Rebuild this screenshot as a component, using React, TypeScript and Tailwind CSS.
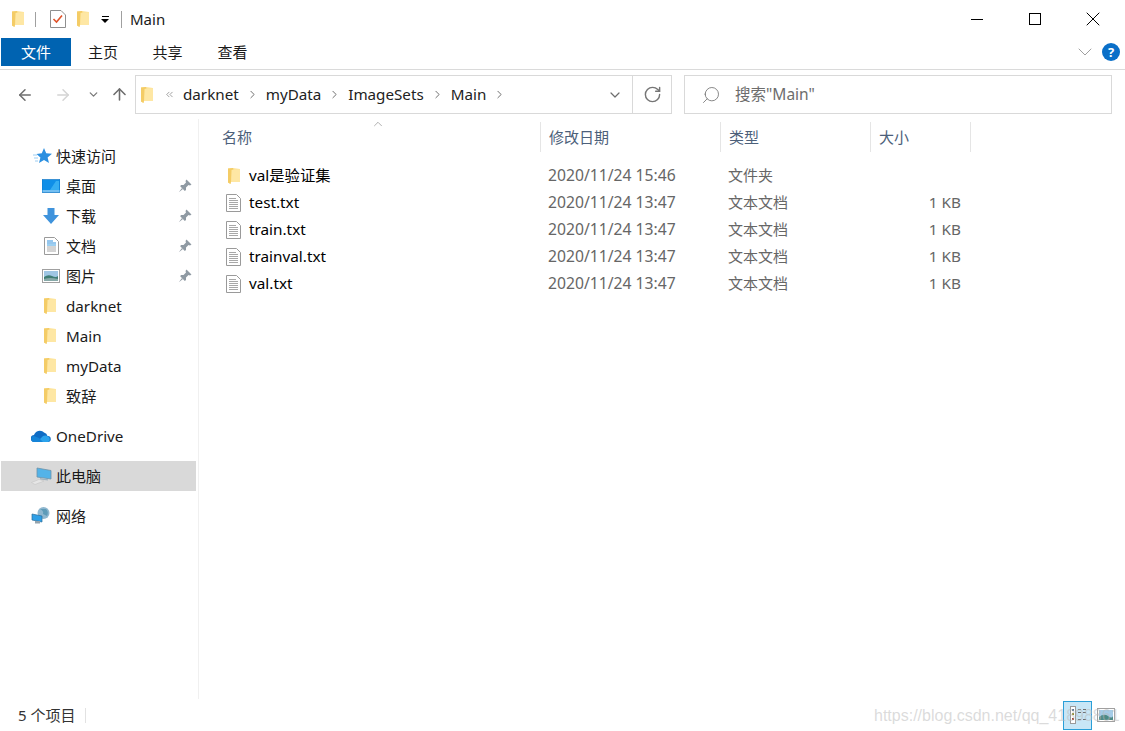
import React from "react";
import { ArrowLeft, ArrowRight, ArrowUp, ChevronDown, ChevronRight, ChevronUp, RotateCw, Search, X, ChevronsLeft } from "lucide-react";

const FONT = '"Noto Sans", "Noto Sans CJK SC", sans-serif';

const FolderIcon = () => (
    <svg width="14" height="18" viewBox="0 0 14 18" className="shrink-0">
        <path d="M1 1.5 L6 1 L13 2 L13 15 L3.5 15 L3.5 17 L1 15.5 Z" fill="#fde49a" />
        <path d="M1 1.5 L6 1 L6.5 2.5 L4.5 3 L4 15 L3.5 17 L1 15.5 Z" fill="#f4cc66" />
        <path d="M5 3 L13 2.5 L13 15 L4.5 15 Z" fill="#fee7a4" />
    </svg>
);

const TextFileIcon = () => (
    <svg width="15" height="18" viewBox="0 0 15 18" className="shrink-0">
        <path d="M0.5 0.5 H10.5 L14.5 4.5 V17.5 H0.5 Z" fill="#fff" stroke="#9a9a9a" />
        <path d="M3 4.5 H10 M3 6.5 H12 M3 8.5 H12 M3 10.5 H12 M3 12.5 H12 M3 14.5 H12" stroke="#a8a8a8" strokeWidth="1" />
    </svg>
);

const Pin = () => (
    <svg width="14" height="14" viewBox="0 0 14 14">
        <path d="M8.5 0.5 L13.5 5.5 L12 6.5 L10.5 6 L8 8.5 L8 11 L6.8 12 L2.2 7.2 L3 6 L5.5 6 L8 3.5 L7.5 2 Z" fill="#8f9aa3" />
        <path d="M4 9 L0.8 13.2 L5 10" fill="#8f9aa3" />
    </svg>
);

const QuickIcon = () => (
    <svg width="20" height="18" viewBox="0 0 20 18">
        <path d="M11 1 L13.2 6.2 L19 6.7 L14.6 10.4 L16 16 L11 13 L6 16 L7.4 10.4 L3.5 7 L8.8 6.2 Z" fill="#2b8fe0" />
        <path d="M0 8 H4 M1 11 H5 M2 14 H5" stroke="#9ccdf2" strokeWidth="1" />
    </svg>
);

const DesktopIcon = () => (
    <svg width="18" height="14" viewBox="0 0 18 14">
        <rect x="0" y="0.5" width="18" height="13" fill="#0f8fe8" stroke="#0a6fc0" strokeWidth="0.6" />
        <path d="M8 11 L14 2 H17 V11 Z" fill="#35aef2" />
        <rect x="0.5" y="11.5" width="17" height="1" fill="#d8effc" />
    </svg>
);

const DownloadIcon = () => (
    <svg width="18" height="18" viewBox="0 0 18 18">
        <path d="M5.5 1 H12.5 V8 H17 L9 17 L1 8 H5.5 Z" fill="#3f93dc" />
    </svg>
);

const DocIcon = () => (
    <svg width="15" height="18" viewBox="0 0 15 18">
        <path d="M0.5 0.5 H10.5 L14.5 4.5 V17.5 H0.5 Z" fill="#fff" stroke="#9a9a9a" />
        <path d="M3 4 H9 M3 6 H12" stroke="#2f8fdc" strokeWidth="1" />
        <path d="M3 8 H12" stroke="#3aa0e4" strokeWidth="1" />
        <path d="M3 10 H12 M3 12 H12 M3 14 H12" stroke="#a8a8a8" strokeWidth="1" />
    </svg>
);

const PictureIcon = () => (
    <svg width="18" height="14" viewBox="0 0 18 14">
        <rect x="0.5" y="0.5" width="17" height="13" fill="#fff" stroke="#a0a0a0" />
        <rect x="2" y="2" width="14" height="10" fill="#9fc6e4" />
        <path d="M2 8 Q6 5 10 7 T16 7 V12 H2 Z" fill="#3f7d74" />
        <path d="M2 10 Q8 8 16 10 V12 H2 Z" fill="#87a9a8" />
    </svg>
);

const CloudIcon = () => (
    <svg width="20" height="14" viewBox="0 0 20 14">
        <path d="M3.5 13 A3.5 3.5 0 0 1 3 6 A6 6 0 0 1 13 3.5 A4.5 4.5 0 0 1 16.5 7 A3 3 0 0 1 17 13 Z" fill="#0f6cc4" />
        <path d="M6 13 L12 7 Q15 6 17 7.5 A3 3 0 0 1 17 13 Z" fill="#2ba3ec" />
        <path d="M3.5 13 A3 3 0 0 1 3 7 L8 9 L12 13 Z" fill="#1584d8" />
    </svg>
);

const PcIcon = () => (
    <svg width="21" height="18" viewBox="0 0 21 18">
        <path d="M6 1 L20 3.5 V12 L6 10 Z" fill="#53b3e8" stroke="#6d93aa" strokeWidth="0.8" />
        <path d="M9 11 L17 12.2 L17 13.5 L9 12.5 Z" fill="#9fb3bf" />
        <path d="M0.5 15.5 L8 12.5 L13 14 L4 17.5 Z" fill="#e6e6e6" stroke="#c0c0c0" strokeWidth="0.5" />
    </svg>
);

const NetworkIcon = () => (
    <svg width="20" height="18" viewBox="0 0 20 18">
        <circle cx="12.5" cy="6" r="6" fill="#8fb7cf" />
        <path d="M9 2 Q13 4 12 7 L16 9 Q18 5 15 2 Z" fill="#5e9bb8" />
        <path d="M1 7 L11 9 V15 L1 13 Z" fill="#2f9fe6" stroke="#2a6d99" strokeWidth="0.7" />
        <rect x="4" y="14" width="5" height="2.5" fill="#94a3ad" />
    </svg>
);

const CheckPageIcon = () => (
    <svg width="16" height="18" viewBox="0 0 16 18">
        <path d="M0.5 0.5 H11 L15.5 5 V17.5 H0.5 Z" fill="#fff" stroke="#8f8f8f" />
        <path d="M3.5 9 L6.5 12 L12 5.5" fill="none" stroke="#e0532a" strokeWidth="1.6" />
    </svg>
);

const HelpIcon = () => (
    <div className="flex h-[18px] w-[18px] items-center justify-center rounded-full bg-[#0a6fc8] text-[13px] leading-none font-bold text-white">
        ?
    </div>
);

const DetailsViewIcon = () => (
    <svg width="20" height="20" viewBox="0 0 20 20">
        <rect x="2.5" y="1.5" width="5" height="17" fill="#fff" stroke="#9a9a9a" />
        <rect x="4" y="4" width="2" height="2" fill="#4a6f96" />
        <rect x="4" y="8" width="2" height="2" fill="#8d8a2c" />
        <rect x="4" y="13" width="2" height="2" fill="#a53a22" />
        <path d="M10 4.5 H13 M15 4.5 H18 M10 7.5 H13 M15 7.5 H18 M10 14.5 H13 M15 14.5 H18" stroke="#6f6f6f" strokeWidth="1" />
    </svg>
);

const LargeViewIcon = () => (
    <svg width="18" height="14" viewBox="0 0 18 14">
        <rect x="0.5" y="0.5" width="17" height="13" fill="#fff" stroke="#a0a0a0" />
        <rect x="2" y="2" width="14" height="10" fill="#a5cce8" />
        <path d="M2 9 Q7 5 11 8 T16 8 V12 H2 Z" fill="#4c8a86" />
    </svg>
);

const quickItems = [
    { name: "桌面", icon: <DesktopIcon /> },
    { name: "下载", icon: <DownloadIcon /> },
    { name: "文档", icon: <DocIcon /> },
    { name: "图片", icon: <PictureIcon /> },
];

const pinnedFolders = ["darknet", "Main", "myData", "致辞"];

const files = [
    { name: "val是验证集", date: "2020/11/24 15:46", type: "文件夹", size: "", folder: true },
    { name: "test.txt", date: "2020/11/24 13:47", type: "文本文档", size: "1 KB", folder: false },
    { name: "train.txt", date: "2020/11/24 13:47", type: "文本文档", size: "1 KB", folder: false },
    { name: "trainval.txt", date: "2020/11/24 13:47", type: "文本文档", size: "1 KB", folder: false },
    { name: "val.txt", date: "2020/11/24 13:47", type: "文本文档", size: "1 KB", folder: false },
];

const crumbs = ["darknet", "myData", "ImageSets", "Main"];

const columns = [
    { label: "名称", width: "w-[327px]" },
    { label: "修改日期", width: "w-[180px]" },
    { label: "类型", width: "w-[150px]" },
    { label: "大小", width: "w-[100px]" },
];

const App: React.FC = () => {
    return (
        <div className="flex h-[731px] w-[1125px] flex-col overflow-hidden bg-white text-[15px] text-[#1a1a1a]" style={{ fontFamily: FONT }}>
            {/* Title bar */}
            <div className="flex h-[38px] items-center pl-[11px]">
                <FolderIcon />
                <div className="mr-[14px] ml-[10px] h-[15px] w-px bg-[#a0a0a0]" />
                <CheckPageIcon />
                <div className="ml-[10px]">
                    <FolderIcon />
                </div>
                <div className="mr-[12px] ml-[11px] flex flex-col items-center gap-[2px]">
                    <div className="h-px w-[7px] bg-black" />
                    <div className="h-0 w-0 border-x-[4px] border-t-[4px] border-x-transparent border-t-black" />
                </div>
                <div className="mr-[8px] h-[17px] w-px bg-[#a0a0a0]" />
                <span>Main</span>
                <div className="ml-auto flex items-center pr-[3px]">
                    <div className="flex w-[58px] justify-center">
                        <div className="h-px w-[12px] bg-black" />
                    </div>
                    <div className="flex w-[58px] justify-center">
                        <div className="h-[12px] w-[12px] border border-black" />
                    </div>
                    <div className="flex w-[58px] justify-center">
                        <X size={24} strokeWidth={1} color="#000" />
                    </div>
                </div>
            </div>

            {/* Ribbon tabs */}
            <div className="flex h-[32px] items-start border-b border-[#dadada] pl-px">
                <div className="flex h-[28px] w-[70px] items-center justify-center bg-[#0063b1] text-white">文件</div>
                <div className="flex h-[28px] w-[64px] items-center justify-center">主页</div>
                <div className="flex h-[28px] w-[65px] items-center justify-center">共享</div>
                <div className="flex h-[28px] w-[65px] items-center justify-center">查看</div>
                <div className="ml-auto flex h-[28px] items-center gap-[5px] pr-[5px]">
                    <ChevronDown size={24} strokeWidth={1} color="#a0a0a0" />
                    <HelpIcon />
                </div>
            </div>

            {/* Address row */}
            <div className="flex h-[49px] items-start pt-[5px]">
                <div className="flex h-[39px] w-[135px] items-center pl-[16px]">
                    <ArrowLeft size={18} strokeWidth={2} color="#6d6d6d" />
                    <ArrowRight size={18} strokeWidth={2} color="#d4d4d4" className="ml-[20px]" />
                    <ChevronDown size={13} strokeWidth={2.4} color="#7a7a7a" className="ml-[15px]" />
                    <ArrowUp size={19} strokeWidth={2} color="#6d6d6d" className="ml-[10px]" />
                </div>
                <div className="flex h-[39px] w-[537px] items-center border border-[#d9d9d9]">
                    <div className="ml-[4px]">
                        <FolderIcon />
                    </div>
                    <ChevronsLeft size={11} strokeWidth={1.4} color="#6d6d6d" className="mr-[8px] ml-[10px]" />
                    {crumbs.map((crumb) => (
                        <React.Fragment key={crumb}>
                            <span className="text-[15.2px] text-[#222]">{crumb}</span>
                            <ChevronRight size={13} strokeWidth={1.8} color="#6d6d6d" className="mx-[7px]" />
                        </React.Fragment>
                    ))}
                    <ChevronDown size={16} strokeWidth={1.8} color="#6d6d6d" className="mr-[9px] ml-auto" />
                    <div className="flex h-full w-[39px] items-center justify-center border-l border-[#d9d9d9]">
                        <RotateCw size={19} strokeWidth={1.8} color="#757575" />
                    </div>
                </div>
                <div className="ml-[12px] flex h-[39px] w-[428px] items-center border border-[#d9d9d9] pl-[16px] text-[#6d6d6d]">
                    <Search size={20} strokeWidth={1} color="#707070" className="-scale-x-100" />
                    <span className="ml-[14px] text-[15.5px]">搜索"Main"</span>
                </div>
            </div>

            <div className="flex min-h-0 flex-1">
                {/* Sidebar */}
                <div className="w-[199px] shrink-0 border-r border-[#f0f0f0] pt-[22px]">
                    <div className="flex h-[30px] items-center pl-[33px]">
                        <QuickIcon />
                        <span className="ml-[3px]">快速访问</span>
                    </div>
                    {quickItems.map((item) => (
                        <div key={item.name} className="flex h-[30px] items-center pl-[42px]">
                            <div className="flex w-[18px] justify-center">{item.icon}</div>
                            <span className="ml-[6px]">{item.name}</span>
                            <div className="mr-[6px] ml-auto">
                                <Pin />
                            </div>
                        </div>
                    ))}
                    {pinnedFolders.map((name) => (
                        <div key={name} className="flex h-[30px] items-center pl-[43px]">
                            <FolderIcon />
                            <span className="ml-[9px] text-[15.2px]">{name}</span>
                        </div>
                    ))}
                    <div className="mt-[10px] flex h-[30px] items-center pl-[31px]">
                        <CloudIcon />
                        <span className="ml-[5px] text-[15.2px]">OneDrive</span>
                    </div>
                    <div className="mt-[10px] ml-px flex h-[30px] w-[195px] items-center bg-[#d9d9d9] pl-[30px]">
                        <PcIcon />
                        <span className="ml-[4px]">此电脑</span>
                    </div>
                    <div className="mt-[10px] flex h-[30px] items-center pl-[31px]">
                        <NetworkIcon />
                        <span className="ml-[5px]">网络</span>
                    </div>
                </div>

                {/* File list */}
                <div className="min-w-0 flex-1 pl-[15px]">
                    <div className="relative mt-[3px] flex h-[30px]">
                        <ChevronUp size={14} strokeWidth={1} color="#7a7a7a" className="absolute top-[-5px] left-[157px]" />
                        {columns.map((col) => (
                            <div key={col.label} className={`flex ${col.width} items-center border-r border-[#e5e5e5] pl-[8px] text-[#4c607a]`}>
                                {col.label}
                            </div>
                        ))}
                    </div>
                    <div className="mt-[10px]">
                        {files.map((file) => (
                            <div key={file.name} className="flex h-[27px] items-center text-[15.3px]">
                                <div className="flex w-[327px] items-center pl-[12px]">
                                    <div className="flex w-[15px] justify-center">
                                        {file.folder ? <FolderIcon /> : <TextFileIcon />}
                                    </div>
                                    <span className="ml-[8px] text-black">{file.name}</span>
                                </div>
                                <div className="w-[180px] pl-[7px] text-[15.7px] text-[#666]">{file.date}</div>
                                <div className="w-[150px] pl-[7px] text-[15px] text-[#666]">{file.type}</div>
                                <div className="w-[100px] pr-[10px] text-right text-[#666]">{file.size}</div>
                            </div>
                        ))}
                    </div>
                </div>
            </div>

            {/* Status bar */}
            <div className="relative flex h-[32px] items-center pl-[18px] text-[#333]">
                <span>5 个项目</span>
                <div className="ml-[10px] h-[15px] w-px bg-[#e2e2e2]" />
                <div className="ml-auto flex items-center pr-[5px]">
                    <div className="flex h-[29px] w-[29px] items-center justify-center border border-[#2a9fd8] bg-[#c8e6f6]">
                        <DetailsViewIcon />
                    </div>
                    <div className="flex h-[29px] w-[28px] items-center justify-center">
                        <LargeViewIcon />
                    </div>
                </div>
                <span className="absolute top-[5px] left-[874px] text-[16px] text-[#b8b8b8]/50" style={{ fontFamily: '"Liberation Sans", sans-serif' }}>
                    https://blog.csdn.net/qq_41898861
                </span>
            </div>
        </div>
    );
};

export default App;
